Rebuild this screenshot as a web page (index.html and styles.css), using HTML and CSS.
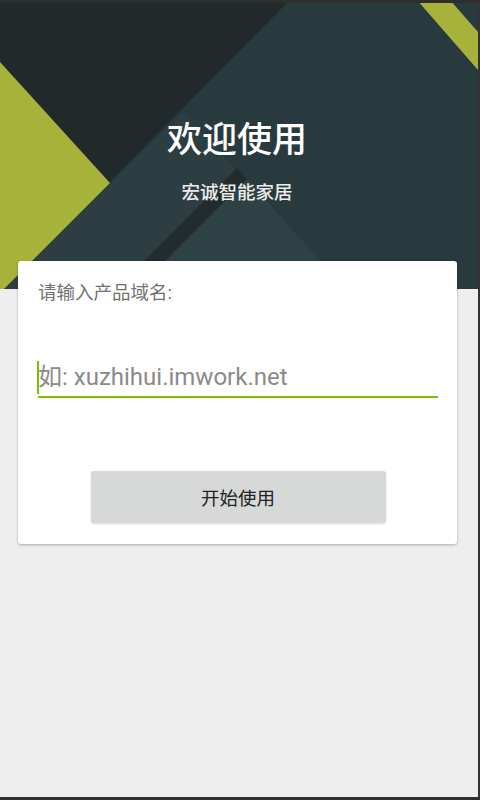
FILE: index.html
```html
<!DOCTYPE html>
<html lang="zh-CN">
<head>
<meta charset="utf-8">
<title>欢迎使用</title>
<link rel="stylesheet" href="styles.css">
</head>
<body>
<div class="screen">
  <header class="hero">
    <svg class="hero-bg" viewBox="0 3 478 286" preserveAspectRatio="none" aria-hidden="true">
      <rect x="0" y="0" width="478" height="300" fill="#21292b"/>
      <polygon points="290,0 478,0 478,300 0,300 0,293" fill="#293a3e"/>
      <polygon points="183,112 355,300 0,300 0,293" fill="#2c3e42"/>
      <polygon points="247,179 355,300 126,300" fill="#2e4246"/>
      <polygon points="237,168 247,179 126,300 105,300" fill="#222b2d"/>
      <polygon points="0,62 110,183 0,293" fill="#a6b23a"/>
      <polygon points="417,0 450,0 478,32 478,70" fill="#a6b23a"/>
    </svg>
    <h1 class="hero-title">欢迎使用</h1>
    <p class="hero-sub">宏诚智能家居</p>
  </header>
  <main class="content">
    <section class="card">
      <div class="field-label">请输入产品域名:</div>
      <div class="field">
        <span class="caret"></span>
        <span class="hint">如: xuzhihui.imwork.net</span>
      </div>
      <div class="actions">
        <button class="btn" type="button">开始使用</button>
      </div>
    </section>
  </main>
</div>
</body>
</html>
```

FILE: styles.css
```css
html, body {
  margin: 0;
  padding: 0;
  background: #eeeeee;
}

.screen {
  width: 480px;
  height: 800px;
  box-sizing: border-box;
  border-top: 3px solid #2e2e2e;
  border-right: 2px solid #333333;
  border-bottom: 3px solid #2e2e2e;
  background: #eeeeee;
  overflow: hidden;
  font-family: Roboto, "Noto Sans CJK SC", sans-serif;
}

.hero {
  position: relative;
  height: 286px;
  box-sizing: border-box;
  padding-top: 118px;
  text-align: center;
  color: #ffffff;
}

.hero-bg {
  position: absolute;
  left: 0;
  top: 0;
  width: 100%;
  height: 100%;
  display: block;
}

.hero-title {
  position: relative;
  margin: 0;
  padding-right: 4px;
  font-size: 35px;
  line-height: 40px;
  font-weight: 500;
  color: #ffffff;
}

.hero-sub {
  position: relative;
  margin: 20px 0 0;
  padding-right: 4px;
  font-size: 18.5px;
  line-height: 24px;
  font-weight: 500;
  color: #ececec;
}

.content {
  padding: 0 21px 0 18px;
}

.card {
  position: relative;
  margin-top: -28px;
  background: #ffffff;
  border-radius: 3px;
  box-shadow: 0 1px 3px rgba(0, 0, 0, 0.28);
  padding: 20px 19px 21px 20px;
}

.field-label {
  font-size: 18.5px;
  line-height: 24px;
  color: #727272;
}

.field {
  display: flex;
  align-items: center;
  height: 38px;
  margin-top: 53px;
  border-bottom: 2px solid #78c000;
}

.caret {
  width: 2px;
  height: 33px;
  margin-left: -1px;
  margin-right: -1px;
  background: #78c000;
}

.hint {
  font-size: 24px;
  line-height: 30px;
  color: #8a8a8a;
  white-space: nowrap;
}

.actions {
  display: flex;
  justify-content: center;
  margin-top: 73px;
}

.btn {
  width: 295px;
  height: 52px;
  border: none;
  border-radius: 3px;
  background: #d7d8d8;
  box-shadow: 0 1px 2px rgba(0, 0, 0, 0.15);
  font-family: Roboto, "Noto Sans CJK SC", sans-serif;
  font-size: 18.5px;
  color: #222222;
  padding: 0;
}
```
